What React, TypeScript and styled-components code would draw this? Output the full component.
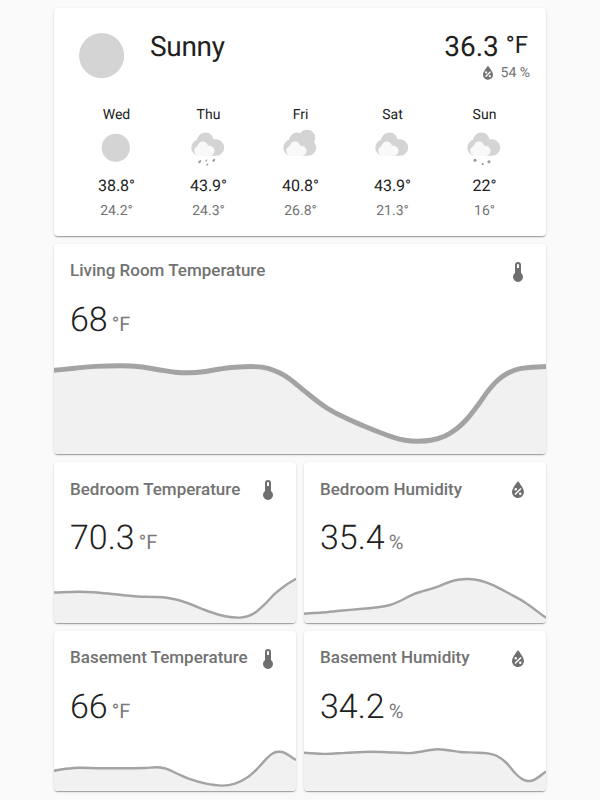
import React from "react";
import styled, { createGlobalStyle } from "styled-components";

const GlobalStyle = createGlobalStyle`
  * { box-sizing: border-box; }
  body {
    margin: 0;
    background: #fafafa;
    color: #212121;
    font-family: Roboto, "Noto Sans", sans-serif;
    text-rendering: geometricPrecision;
  }
`;

const Page = styled.main`
  width: 492px;
  height: 800px;
  margin: 0 auto;
  padding-top: 8px;
  display: flex;
  flex-direction: column;
  gap: 8px;
`;

const Card = styled.section<{ $height: number }>`
  height: ${(p) => p.$height}px;
  min-width: 0;
  display: flex;
  flex-direction: column;
  background: #fff;
  border-radius: 4px;
  box-shadow: 0 2px 1px -1px rgba(0, 0, 0, 0.2), 0 1px 1px 0 rgba(0, 0, 0, 0.14), 0 1px 3px 0 rgba(0, 0, 0, 0.12);
`;

const Row = styled.div`
  display: grid;
  grid-template-columns: 1fr 1fr;
  gap: 8px;
`;

const Current = styled.div`
  display: flex;
  padding: 16px 16px 0;
  height: 88px;
`;

const Condition = styled.div`
  flex: 1;
  padding: 6px 0 0 16px;
  font-size: 28px;
  line-height: 34px;
  letter-spacing: -0.012em;
`;

const CurrentReading = styled.div`
  display: flex;
  flex-direction: column;
  align-items: flex-end;
`;

const OutdoorTemp = styled.div`
  display: flex;
  gap: 7px;
  padding: 6px 2px 0 0;
  font-size: 28px;
  line-height: 34px;
`;

const OutdoorUnit = styled.span`
  font-size: 24px;
  line-height: 30px;
`;

const Humidity = styled.div`
  display: flex;
  align-items: center;
  gap: 3px;
  margin-top: -2px;
  font-size: 14px;
  line-height: 20px;
  color: #727272;
`;

const HumidityText = styled.span`
  padding-top: 1px;
`;

const Forecast = styled.div`
  display: flex;
  justify-content: space-between;
  padding: 8px 42px 0;
`;

const Day = styled.div`
  width: 40px;
  display: flex;
  flex-direction: column;
  align-items: center;
  white-space: nowrap;
`;

const DayName = styled.div`
  padding-left: 1px;
  font-size: 14px;
  line-height: 20px;
  margin: 1px 0 3px;
`;

const High = styled.div`
  padding-left: 1px;
  font-size: 16px;
  line-height: 24px;
  margin-top: 6px;
`;

const Low = styled.div`
  padding-left: 1px;
  font-size: 14px;
  line-height: 20px;
  margin-top: 3px;
  color: #727272;
`;

const Header = styled.header`
  display: flex;
  justify-content: space-between;
  padding: 8px 16px 0;
  height: 48px;
`;

const Title = styled.h2`
  margin: 0.4px 0 0;
  font-size: 17px;
  font-weight: 500;
  line-height: 37px;
  white-space: nowrap;
  color: #727272;
  text-rendering: auto;
`;

const HeaderIcon = styled.div`
  padding: 8px 0;
  color: #6f6f6f;
`;

const Reading = styled.div`
  display: flex;
  align-items: baseline;
  gap: 4px;
  padding: 7px 16px 0;
  line-height: 42px;
`;

const Value = styled.span`
  font-size: 34px;
  font-weight: 300;
`;

const Unit = styled.span`
  font-size: 20px;
  color: #7a7a7a;
`;

const Graph = styled.svg`
  display: block;
  width: 100%;
  margin-top: auto;
  border-radius: 0 0 4px 4px;
`;

const MdiSvg = styled.svg`
  display: block;
  fill: currentColor;
`;

const ICONS = {
  temperature: "M15 13V5A3 3 0 0 0 9 5V13A5 5 0 1 0 15 13M12 4A1 1 0 0 1 13 5V8H11V5A1 1 0 0 1 12 4Z",
  humidity:
    "M12 3.25C12 3.25 6 10 6 14C6 17.32 8.69 20 12 20A6 6 0 0 0 18 14C18 10 12 3.25 12 3.25M14.47 9.97L15.53 11.03L9.53 17.03L8.47 15.97M9.75 10A1.25 1.25 0 0 1 11 11.25A1.25 1.25 0 0 1 9.75 12.5A1.25 1.25 0 0 1 8.5 11.25A1.25 1.25 0 0 1 9.75 10M14.25 14.5A1.25 1.25 0 0 1 15.5 15.75A1.25 1.25 0 0 1 14.25 17A1.25 1.25 0 0 1 13 15.75A1.25 1.25 0 0 1 14.25 14.5Z",
};

type Kind = keyof typeof ICONS;

const Icon = ({ kind, size = 24 }: { kind: Kind; size?: number }) => (
  <MdiSvg width={size} height={size} viewBox="0 0 24 24">
    <path fillRule="evenodd" d={ICONS[kind]} />
  </MdiSvg>
);

type Weather = "sunny" | "rainy" | "partlycloudy" | "cloudy" | "snowy";

const drop =
  "c-.224.248-.571.299-.775.114-.204-.185-.187-.535.037-.783.148-.163.591-.329.875-.424.125-.041.227.052.198.18-.066.292-.187.75-.335.913";
const smallDrop =
  "c-.154.17-.394.206-.534.079-.14-.127-.129-.369.026-.54.102-.112.407-.227.603-.292.086-.028.157.036.137.124-.046.201-.13.516-.232.629";

const WeatherIcon = ({ state, size = 40 }: { state: Weather; size?: number }) => (
  <svg width={size} height={size} viewBox="0 0 17 17">
    {state === "sunny" && <circle cx="8.4" cy="8.4" r="6" fill="#d4d4d4" />}
    {state === "partlycloudy" && <circle cx="11.497" cy="4.211" r="3.484" fill="#d4d4d4" />}
    {state !== "sunny" && (
      <>
        <path
          fill="#d4d4d4"
          d="m3.8863 5.035c-0.54892 0.16898-1.04 0.46637-1.4372 0.8636-0.63077 0.63041-1.0206 1.4933-1.0206 2.455 0 1.9251 1.5589 3.4682 3.4837 3.4682h6.9688c1.9251 0 3.484-1.5981 3.484-3.5232 0-1.9251-1.5589-3.5232-3.484-3.5232h-1.0834c-0.25294-1.6916-1.6986-2.9083-3.4463-2.9083-1.7995 0-3.2805 1.4153-3.465 3.1679"
        />
        <path
          fill="#f9f9f9"
          d="m4.1996 7.6995c-0.33902 0.10407-0.64276 0.28787-0.88794 0.5334-0.39017 0.38982-0.63147 0.92322-0.63147 1.5176 0 1.1896 0.96414 2.1431 2.1537 2.1431h4.3071c1.1896 0 2.153-0.98742 2.153-2.1777 0-1.1896-0.96344-2.1777-2.153-2.1777h-0.66992c-0.15593-1.0449-1.0499-1.7974-2.1297-1.7974-1.112 0-2.0274 0.87524-2.1417 1.9586"
        />
      </>
    )}
    {state === "rainy" && (
      <g fill="#999">
        <path d={"M5.285 14.734" + drop} />
        <path d={"M11.257 14.163" + drop} />
        <path d={"M8.432 15.878" + smallDrop} />
        <path d={"M7.991 14.118" + smallDrop} />
      </g>
    )}
    {state === "snowy" && (
      <g fill="#999">
        <circle cx="7.965" cy="15.348" r=".467" />
        <circle cx="10.604" cy="14.359" r=".66" />
        <circle cx="4.666" cy="13.698" r=".66" />
      </g>
    )}
  </svg>
);

type Point = [number, number];

const smoothPath = (pts: Point[]) =>
  pts.slice(1).reduce((d, p, i) => {
    const a = pts[i];
    const before = pts[i - 1] ?? a;
    const after = pts[i + 2] ?? p;
    const t = (p[0] - a[0]) / 3;
    const slope = (l: Point, r: Point) => (r[1] - l[1]) / (r[0] - l[0]);
    const s1 = slope(before, p);
    const s2 = slope(a, after);
    return `${d} C${a[0] + t} ${a[1] + t * s1} ${p[0] - t} ${p[1] - t * s2} ${p[0]} ${p[1]}`;
  }, `M${pts[0][0]} ${pts[0][1]}`);

const Sparkline = ({ points, width, height }: { points: Point[]; width: number; height: number }) => {
  const line = smoothPath(points);
  return (
    <Graph viewBox={`0 0 ${width} ${height}`}>
      <path d={`${line} V${height} H0Z`} fill="#f1f1f1" />
      <path d={line} fill="none" stroke="#a3a3a3" strokeWidth={width / 100} />
    </Graph>
  );
};

interface SensorProps {
  title: string;
  kind: Kind;
  value: string;
  unit: string;
  points: Point[];
  wide?: boolean;
}

const SensorCard = ({ title, kind, value, unit, points, wide }: SensorProps) => (
  <Card $height={wide ? 210.2 : 160.4}>
    <Header>
      <Title>{title}</Title>
      <HeaderIcon>
        <Icon kind={kind} />
      </HeaderIcon>
    </Header>
    <Reading>
      <Value>{value}</Value>
      <Unit>{unit}</Unit>
    </Reading>
    <Sparkline points={points} width={wide ? 492 : 242} height={wide ? 98 : 48} />
  </Card>
);

const days: { name: string; state: Weather; high: string; low: string }[] = [
  { name: "Wed", state: "sunny", high: "38.8°", low: "24.2°" },
  { name: "Thu", state: "rainy", high: "43.9°", low: "24.3°" },
  { name: "Fri", state: "partlycloudy", high: "40.8°", low: "26.8°" },
  { name: "Sat", state: "cloudy", high: "43.9°", low: "21.3°" },
  { name: "Sun", state: "snowy", high: "22°", low: "16°" },
];

const livingRoom: Point[] = [
  [0, 14.3], [21, 12.2], [41, 10.4], [68, 9.7], [86, 10.8], [106, 14], [121, 16.2], [135, 16.8], [149, 15.8],
  [166, 13], [181, 11.2], [201, 10.6], [214, 12.3], [226, 17], [236, 23.2], [250, 34.6], [266, 47.2], [279, 55.7],
  [296, 64], [311, 70.5], [326, 76.5], [338, 80.8], [351, 84.2], [364, 85.2], [378, 84], [391, 80],
  [403, 72.5], [413, 63], [424, 49], [434, 35], [444, 24], [454, 17], [466, 12.6], [492, 10.5],
];

const bedroomTemp: Point[] = [
  [0, 17.5], [24, 16.7], [40, 17.2], [61, 19.3], [81, 21.3], [96, 21.9], [109, 22.2], [122, 24.5], [136, 29],
  [151, 35], [166, 40], [178, 42.2], [186, 42.6], [194, 41.2], [202, 37], [211, 29], [221, 18.7], [231, 10.7], [242, 3.8],
];

const bedroomHumidity: Point[] = [
  [0, 38.7], [18, 37.5], [36, 35.8], [56, 34], [74, 32.3], [86, 30], [96, 26], [106, 20.8], [116, 17],
  [131, 12.7], [144, 7.5], [154, 4.8], [164, 4], [176, 5.5], [189, 10.2], [206, 19], [221, 27.5], [242, 42.8],
];

const basementTemp: Point[] = [
  [0, 27.7], [12, 25.8], [25, 24.7], [46, 25.3], [71, 25.2], [91, 25], [103, 24.2], [112, 25.6], [124, 31],
  [136, 36.2], [151, 40.4], [168, 42.6], [181, 40.6], [194, 34], [204, 25], [213, 15.2], [219, 10.3], [224, 8.8],
  [230, 9.6], [242, 17],
];

const basementHumidity: Point[] = [
  [0, 9.7], [22, 10.9], [41, 9.9], [66, 8.7], [91, 9.5], [106, 10.1], [118, 8.5], [133, 6.2], [146, 7.5], [156, 9],
  [171, 9.6], [185, 10.6], [193, 13], [202, 19.5], [211, 30], [218, 36], [224, 38], [230, 36.9], [242, 28.5],
];

export default function App() {
  return (
    <>
      <GlobalStyle />
      <Page>
        <Card $height={228}>
          <Current>
            <WeatherIcon state="sunny" size={64} />
            <Condition>Sunny</Condition>
            <CurrentReading>
              <OutdoorTemp>
                36.3 <OutdoorUnit>°F</OutdoorUnit>
              </OutdoorTemp>
              <Humidity>
                <Icon kind="humidity" size={20} />
                <HumidityText>54 %</HumidityText>
              </Humidity>
            </CurrentReading>
          </Current>
          <Forecast>
            {days.map((day) => (
              <Day key={day.name}>
                <DayName>{day.name}</DayName>
                <WeatherIcon state={day.state} />
                <High>{day.high}</High>
                <Low>{day.low}</Low>
              </Day>
            ))}
          </Forecast>
        </Card>
        <SensorCard title="Living Room Temperature" kind="temperature" value="68" unit="°F" points={livingRoom} wide />
        <Row>
          <SensorCard title="Bedroom Temperature" kind="temperature" value="70.3" unit="°F" points={bedroomTemp} />
          <SensorCard title="Bedroom Humidity" kind="humidity" value="35.4" unit="%" points={bedroomHumidity} />
        </Row>
        <Row>
          <SensorCard title="Basement Temperature" kind="temperature" value="66" unit="°F" points={basementTemp} />
          <SensorCard title="Basement Humidity" kind="humidity" value="34.2" unit="%" points={basementHumidity} />
        </Row>
      </Page>
    </>
  );
}
